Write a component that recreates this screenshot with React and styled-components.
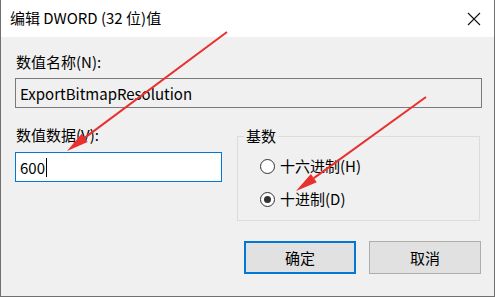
import React from 'react';
import styled, { createGlobalStyle } from 'styled-components';

const GlobalStyle = createGlobalStyle`
  html, body {
    margin: 0;
    padding: 0;
    background: #ffffff;
  }
  body {
    font-family: "Noto Sans CJK SC", "Noto Sans", sans-serif;
    color: #000;
  }
`;

const Window = styled.div`
  position: relative;
  width: 493px;
  height: 296px;
  border-left: 1px solid #707070;
  border-right: 1px solid #707070;
  border-bottom: 1px solid #707070;
  background: #f0f0f0;
  display: flex;
  flex-direction: column;
  overflow: hidden;
`;

const TitleBar = styled.div`
  height: 37px;
  background: #ffffff;
  display: flex;
  align-items: center;
  justify-content: space-between;
  padding: 0 0 0 9px;
`;

const Title = styled.span`
  font-size: 15px;
  line-height: 20px;
  margin-top: -1px;
`;

const CloseButton = styled.div`
  width: 40px;
  height: 37px;
  display: flex;
  align-items: center;
  justify-content: center;
`;

const Body = styled.div`
  flex: 1;
  padding: 15px 12px 0 14px;
  display: flex;
  flex-direction: column;
`;

const Label = styled.div`
  font-size: 15px;
  line-height: 20px;
  padding-left: 1px;
`;

const TextBox = styled.div`
  box-sizing: border-box;
  height: 30px;
  width: ${(p) => p.width || '100%'};
  margin-top: ${(p) => p.gap || 6}px;
  border: 1px solid ${(p) => (p.active ? '#0078d7' : '#7a7a7a')};
  background: ${(p) => (p.active ? '#ffffff' : '#f0f0f0')};
  display: flex;
  align-items: center;
  padding-left: 4px;
  font-size: 15px;
`;

const Caret = styled.span`
  display: inline-block;
  width: 1px;
  height: 19px;
  background: #000;
  margin-left: 1px;
`;

const DataRow = styled.div`
  display: flex;
  gap: 15px;
  margin-top: 17px;
`;

const DataColumn = styled.div`
  display: flex;
  flex-direction: column;
`;

const Group = styled.fieldset`
  box-sizing: border-box;
  width: 243px;
  height: 95px;
  margin: 1px 0 0 0;
  border: 1px solid #dcdcdc;
  display: flex;
  flex-direction: column;
  gap: 13px;
  padding: 10px 6px 0 22px;
`;

const Legend = styled.legend`
  font-size: 15px;
  line-height: 20px;
  padding: 0 2px;
  margin-left: -16px;
`;

const RadioRow = styled.label`
  display: flex;
  align-items: center;
  gap: 5px;
  font-size: 15px;
  line-height: 20px;
`;

const RadioCircle = styled.span`
  box-sizing: border-box;
  width: 15px;
  height: 15px;
  border-radius: 50%;
  border: 1px solid #333333;
  background: #ffffff;
  display: flex;
  align-items: center;
  justify-content: center;

  &::after {
    content: '';
    width: 7px;
    height: 7px;
    border-radius: 50%;
    background: ${(p) => (p.checked ? '#333333' : 'transparent')};
  }
`;

const ButtonRow = styled.div`
  display: flex;
  justify-content: flex-end;
  gap: 13px;
  margin-top: 20px;
  padding-right: 1px;
`;

const Button = styled.div`
  box-sizing: border-box;
  width: 112px;
  height: 33px;
  display: flex;
  align-items: center;
  justify-content: center;
  font-size: 15px;
  background: #e1e1e1;
  border: ${(p) => (p.primary ? '2px solid #0078d7' : '1px solid #adadad')};
`;

const Overlay = styled.svg`
  position: absolute;
  left: -1px;
  top: 0;
  pointer-events: none;
`;

function Arrow({ from, to }) {
  const dx = to[0] - from[0];
  const dy = to[1] - from[1];
  const len = Math.hypot(dx, dy);
  const ux = dx / len;
  const uy = dy / len;
  const headLen = 22;
  const half = 5;
  const bx = to[0] - ux * headLen;
  const by = to[1] - uy * headLen;
  const px = -uy * half;
  const py = ux * half;
  return (
    <g>
      <line x1={from[0]} y1={from[1]} x2={bx} y2={by} stroke="#e8302e" strokeWidth="2" />
      <polygon
        points={`${to[0]},${to[1]} ${bx + px},${by + py} ${bx - px},${by - py}`}
        fill="#e8302e"
      />
    </g>
  );
}

export default function App() {
  return (
    <>
      <GlobalStyle />
      <Window>
        <TitleBar>
          <Title>编辑 DWORD (32 位)值</Title>
          <CloseButton>
            <svg width="14" height="14" viewBox="0 0 14 14">
              <path d="M1 1 L13 13 M13 1 L1 13" stroke="#111" strokeWidth="1.1" fill="none" />
            </svg>
          </CloseButton>
        </TitleBar>
        <Body>
          <Label>数值名称(N):</Label>
          <TextBox>ExportBitmapResolution</TextBox>
          <DataRow>
            <DataColumn>
              <Label>数值数据(V):</Label>
              <TextBox active width="207px" gap={7}>
                600<Caret />
              </TextBox>
            </DataColumn>
            <Group>
              <Legend>基数</Legend>
              <RadioRow>
                <RadioCircle />
                十六进制(H)
              </RadioRow>
              <RadioRow>
                <RadioCircle checked />
                十进制(D)
              </RadioRow>
            </Group>
          </DataRow>
          <ButtonRow>
            <Button primary>确定</Button>
            <Button>取消</Button>
          </ButtonRow>
        </Body>
        <Overlay width="495" height="297">
          <Arrow from={[227, 32]} to={[67, 151]} />
          <Arrow from={[426, 97]} to={[296, 191]} />
        </Overlay>
      </Window>
    </>
  );
}
